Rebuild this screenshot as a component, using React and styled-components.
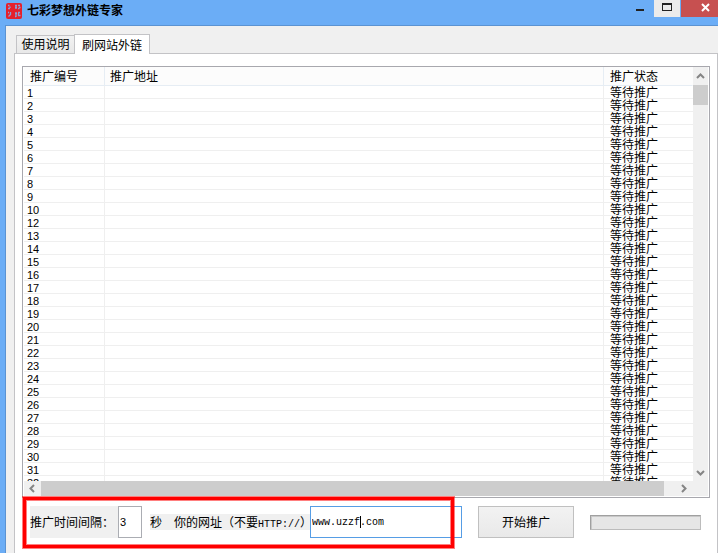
import React from "react";
import styled, { createGlobalStyle, css } from "styled-components";

const GlobalStyle = createGlobalStyle`
  * { box-sizing: border-box; }
  body {
    margin: 0;
    color: #000;
    font-family: "Liberation Sans", "Noto Sans CJK SC", sans-serif;
    font-size: 12px;
    line-height: 16px;
  }
  button, input { font: inherit; color: inherit; margin: 0; border-radius: 0; }
`;

const Window = styled.div`
  display: flex;
  flex-direction: column;
  height: 100vh;
  min-height: 320px;
  overflow: hidden;
  background: #6badf6;
`;

const TitleBar = styled.header`
  display: flex;
  align-items: flex-start;
  height: 25px;
  padding-left: 6px;
`;

const AppIcon = styled.svg`
  width: 16px;
  height: 16px;
  margin: 3px 5px 0 0;
`;

const Title = styled.h1`
  flex: 1;
  margin: 3px 0 0;
  font-size: 12px;
  line-height: 16px;
  font-weight: 700;
`;

const captionTones = {
  plain: css`width: 28px; background: transparent;`,
  light: css`width: 26px; background: #ebebeb;`,
  close: css`width: 37px; padding-left: 11px; background: #c75050; margin-left: 1px;`,
};

const CaptionButton = styled.button`
  display: flex;
  justify-content: center;
  height: 17px;
  padding: 0;
  border: 0;
  ${({ $tone }) => captionTones[$tone]}
`;

const Client = styled.main`
  flex: 1;
  min-height: 0;
  display: flex;
  flex-direction: column;
  margin-left: 5px;
  padding: 8px 0 0 8px;
  border: solid #5b93d2;
  border-width: 1px 0 0 1px;
  background: #f0f0f0;
`;

const Tabs = styled.div`
  display: flex;
  align-items: flex-end;
  height: 20px;
  padding-left: 2px;
  margin-bottom: -1px;
  position: relative;
  z-index: 1;
`;

const Tab = styled.button`
  padding: 0;
  border: 1px solid #c3c3c6;
  border-bottom: 0;
  ${({ $active }) =>
    $active
      ? css`width: 76px; height: 20px; padding-top: 2px; background: #fff;`
      : css`width: 58px; height: 18px; padding-top: 1px; margin-bottom: 1px; background: linear-gradient(#f2f2f2, #e8e8e8); border-right: 0;`}
`;

const Panel = styled.section`
  flex: 1;
  min-height: 0;
  display: flex;
  flex-direction: column;
  gap: 8px;
  padding: 12px 7px 15px;
  border: solid #c3c3c6;
  border-width: 1px 1px 0;
  background: #fff;
`;

const ListBox = styled.div`
  flex: 1;
  min-height: 0;
  display: grid;
  grid-template: minmax(0, 1fr) 15px / minmax(0, 1fr) 15px;
  padding: 1px;
  padding-top: 0;
  border: 1px solid #a8a8ae;
`;

const Viewport = styled.div`
  overflow: hidden;
`;

const Table = styled.table`
  width: 100%;
  table-layout: fixed;
  border-collapse: separate;
  border-spacing: 0;
`;

const HeadCell = styled.th`
  width: ${({ $width }) => $width || "auto"};
  height: 19px;
  padding: 2px 0 0 5px;
  border: solid #e6edf4;
  border-width: 0 1px 1px 0;
  background: #fcfcfc;
  text-align: left;
  font-weight: 400;
  line-height: 16px;
  &:first-child { padding-left: 6px; }
  &:last-child { padding-left: 6px; border-right-color: #fcfcfc; }
`;

const Cell = styled.td`
  height: 13px;
  padding: 2px 0 0 5px;
  border: solid #efefef;
  border-width: 0 1px 1px 0;
  line-height: 10px;
  &:first-child { padding-left: 3px; font-size: 11px; }
  &:last-child { padding-left: 6px; border-right: 0; }
`;

const ScrollBar = styled.div`
  display: flex;
  flex-direction: ${({ $vertical }) => ($vertical ? "column" : "row")};
  ${({ $vertical }) => !$vertical && css`grid-column: 1 / -1; padding-right: 16px;`}
  ${({ $vertical }) => $vertical && css`padding-top: 1px;`}
  background: #f0f0f0;
`;

const ScrollButton = styled.button`
  flex: none;
  display: grid;
  place-items: center;
  width: ${({ $vertical }) => ($vertical ? "15px" : "17px")};
  height: ${({ $vertical }) => ($vertical ? "17px" : "15px")};
  padding: 0;
  border: 0;
  background: transparent;
`;

const Thumb = styled.div`
  flex: ${({ $size }) => $size};
  background: #cdcdcd;
`;

const Track = styled.div`
  flex: 1;
`;

const Footer = styled.form`
  position: relative;
  display: flex;
  align-items: center;
  height: 32px;
  padding: 0 9px 0 8px;
`;

const Label = styled.label`
  flex: none;
  width: ${({ $width }) => $width};
  height: ${({ $tall }) => ($tall ? "32px" : "16px")};
  padding-top: 2px;
  line-height: ${({ $tall }) => ($tall ? "30px" : "14px")};
  background: #f0f0f0;
  white-space: pre;
`;

const Latin = styled.span`
  font-family: "Liberation Mono", monospace;
  font-size: 10px;
`;

const Field = styled.input`
  width: 100%;
  height: 32px;
  padding: 0 1px;
  border: 1px solid ${({ $focused }) => ($focused ? "#569de5" : "#abadb3")};
  background: #fff;
  outline: 0;
  font-family: ${({ $mono }) => ($mono ? '"Liberation Mono", monospace' : "inherit")};
  font-size: ${({ $mono }) => ($mono ? "10px" : "11px")};
`;

const FieldBox = styled.div`
  position: relative;
  flex: none;
  width: ${({ $width }) => $width};
  margin-right: ${({ $gap }) => $gap};
`;

const Caret = styled.span`
  position: absolute;
  left: 50px;
  top: 10px;
  width: 1px;
  height: 12px;
  background: #000;
`;

const StartButton = styled.button`
  flex: none;
  width: 96px;
  height: 32px;
  margin-right: 16px;
  padding: 2px 0 0;
  border: 1px solid #c0c0c0;
  background: linear-gradient(#f2f2f2, #e9e9e9);
`;

const Progress = styled.div`
  flex: 1;
  height: 15px;
  border: 1px solid #bcbcbc;
  border-top-color: #a0a0a0;
  border-left-color: #a0a0a0;
  background: #e6e6e6;
  box-shadow: inset 1px 1px 0 #c8c8c8;
`;

const Highlight = styled.div`
  position: absolute;
  top: -9px;
  bottom: -10px;
  left: 1px;
  width: 431px;
  border: 3px solid #f00;
  box-shadow: 0 0 0 1px rgba(255, 0, 0, 0.5), inset 0 0 0 1px rgba(255, 0, 0, 0.5);
  pointer-events: none;
`;

const arrows = {
  up: "M1 6 4.5 2.5 8 6",
  down: "M1 3 4.5 6.5 8 3",
  left: "M6 1 2.5 4.5 6 8",
  right: "M3 1 6.5 4.5 3 8",
};

function Arrow({ dir }) {
  return (
    <svg width="9" height="9" viewBox="0 0 9 9" aria-hidden="true">
      <path d={arrows[dir]} fill="none" stroke="#858585" strokeWidth="2" />
    </svg>
  );
}

const rowNumbers = Array.from({ length: 32 }, (_, i) => i + 1).filter((n) => n !== 11);

export default function App() {
  return (
    <>
      <GlobalStyle />
      <Window>
        <TitleBar>
          <AppIcon viewBox="0 0 16 16" aria-hidden="true">
            <rect width="16" height="16" rx="2" fill="#e5202c" />
            <path
              d="M2 2.500h1.500M4 3.500v1.500M2 5.500h2M9 2.500h2M10 2v4M9 4.500h2M12 2.500h2M13 4.500h1.500M12 5.500h1.500M2 9.500h1M4.500 9v2.500L2.500 13.500M9 10.500h2M10 9v5M12 9.500h2M12.500 10v3M12 12.500h2.500M9 13.500h1"
              fill="none"
              stroke="#8a9fd8"
              strokeWidth="1.300"
            />
          </AppIcon>
          <Title>七彩梦想外链专家</Title>
          <CaptionButton $tone="plain" aria-label="最小化">
            <svg width="8" height="17"><path d="M0 9h8v2H0z" fill="#222" /></svg>
          </CaptionButton>
          <CaptionButton $tone="light" aria-label="最大化">
            <svg width="10" height="17">
              <path d="M0 3h10v8H0zM1 5v5h8V5z" fill="#222" fillRule="evenodd" />
            </svg>
          </CaptionButton>
          <CaptionButton $tone="close" aria-label="关闭">
            <svg width="9" height="17">
              <path d="M1 4l7 7M8 4l-7 7" stroke="#fff" strokeWidth="2" />
            </svg>
          </CaptionButton>
        </TitleBar>
        <Client>
          <Tabs role="tablist">
            <Tab role="tab" aria-selected="false">使用说明</Tab>
            <Tab role="tab" aria-selected="true" $active>刷网站外链</Tab>
          </Tabs>
          <Panel>
            <ListBox>
              <Viewport>
                <Table>
                  <thead>
                    <tr>
                      <HeadCell $width="81px">推广编号</HeadCell>
                      <HeadCell>推广地址</HeadCell>
                      <HeadCell $width="89px">推广状态</HeadCell>
                    </tr>
                  </thead>
                  <tbody>
                    {rowNumbers.map((n) => (
                      <tr key={n}>
                        <Cell>{n}</Cell>
                        <Cell />
                        <Cell>等待推广</Cell>
                      </tr>
                    ))}
                  </tbody>
                </Table>
              </Viewport>
              <ScrollBar $vertical>
                <ScrollButton type="button" $vertical aria-label="向上"><Arrow dir="up" /></ScrollButton>
                <Thumb $size="0 0 20px" />
                <Track />
                <ScrollButton type="button" $vertical aria-label="向下"><Arrow dir="down" /></ScrollButton>
              </ScrollBar>
              <ScrollBar>
                <ScrollButton type="button" aria-label="向左"><Arrow dir="left" /></ScrollButton>
                <Thumb $size="56" />
                <Track />
                <ScrollButton type="button" aria-label="向右"><Arrow dir="right" /></ScrollButton>
              </ScrollBar>
            </ListBox>
            <Footer onSubmit={(e) => e.preventDefault()}>
              <Label htmlFor="interval" $width="88px" $tall>推广时间间隔：</Label>
              <FieldBox $width="24px" $gap="8px">
                <Field id="interval" defaultValue="3" />
              </FieldBox>
              <Label htmlFor="site" $width="160px">
                秒　你的网址（不要<Latin>HTTP://</Latin>）
              </Label>
              <FieldBox $width="152px" $gap="16px">
                <Field id="site" defaultValue="www.uzzf.com" $mono $focused />
                <Caret />
              </FieldBox>
              <StartButton type="submit">开始推广</StartButton>
              <Progress role="progressbar" aria-label="推广进度" aria-valuenow={0} />
              <Highlight />
            </Footer>
          </Panel>
        </Client>
      </Window>
    </>
  );
}
